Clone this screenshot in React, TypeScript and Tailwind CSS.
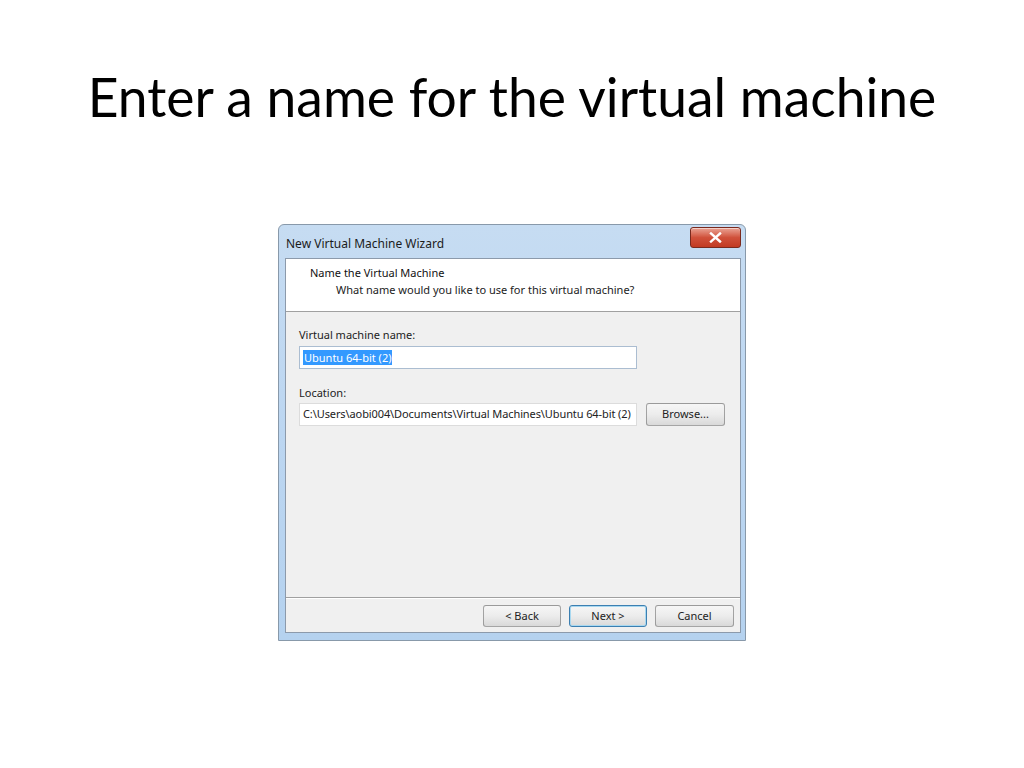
import React from "react";

const uiFont = { fontFamily: '"Noto Sans", "Open Sans", sans-serif' };

function WinButton({ label, focused = false, className = "" }: { label: string; focused?: boolean; className?: string }) {
  return (
    <div
      className={`flex items-center justify-center rounded-[3px] border text-[11px] text-[#222] bg-gradient-to-b from-[#f6f6f6] via-[#ececec] to-[#d9d9d9] ${
        focused ? "border-[#3c7fb1] shadow-[inset_0_0_0_1px_#a8d8f0]" : "border-[#707070]/60"
      } ${className}`}
    >
      {label}
    </div>
  );
}

function CloseButton() {
  return (
    <div className="w-[51px] h-[21px] rounded-[3px] border border-[#7a2a1e] bg-gradient-to-b from-[#e9a395] via-[#d0513b] to-[#c23a22] flex items-center justify-center shadow-[inset_0_1px_0_rgba(255,255,255,0.5)]">
      <svg width="13" height="11" viewBox="0 0 13 11">
        <path d="M2 1.5 L11 9.5 M11 1.5 L2 9.5" stroke="#ffffff" strokeWidth="2.4" strokeLinecap="square" />
      </svg>
    </div>
  );
}

export default function App() {
  return (
    <div className="w-[1024px] h-[768px] bg-white flex flex-col items-center">
      <h1
        className="mt-[60px] text-[53.4px] leading-[72px] text-black"
        style={{ fontFamily: 'Lato, "Open Sans", sans-serif' }}
      >
        Enter a name for the virtual machine
      </h1>

      {/* Wizard dialog screenshot */}
      <div
        className="mt-[92px] w-[468px] h-[417px] flex flex-col rounded-t-[6px] border border-[#8899aa] bg-gradient-to-b from-[#c6dcf2] via-[#bcd6f1] to-[#b5d2ef]"
        style={uiFont}
      >
        {/* title bar */}
        <div className="h-[33px] flex items-start justify-between pl-[7px] pr-[4px]">
          <span className="mt-[10px] text-[12px] text-[#1b1b1b]">New Virtual Machine Wizard</span>
          <div className="mt-[2px]">
            <CloseButton />
          </div>
        </div>

        {/* client */}
        <div className="ml-[6px] mr-[4px] h-[375px] border border-[#8c9aab] flex flex-col bg-[#f0f0f0]">
          <div className="h-[53px] bg-white border-b border-[#a0a0a0] pl-[24px] pt-[6px]">
            <div className="text-[11px] leading-[15px] text-[#111]">Name the Virtual Machine</div>
            <div className="text-[11px] leading-[15px] text-[#222] pl-[26px] mt-[2px]">
              What name would you like to use for this virtual machine?
            </div>
          </div>

          <div className="flex-1 pl-[13px] pt-[15px] text-[11px] text-[#222]">
            <div className="leading-[15px]">Virtual machine name:</div>
            <div className="mt-[4px] w-[338px] h-[23px] bg-white border border-[#abbdd1] flex items-center pl-[3px]">
              <span className="bg-[#3399ff] text-white leading-[15px] px-[1px]">Ubuntu 64-bit (2)</span>
            </div>

            <div className="mt-[16px] leading-[15px]">Location:</div>
            <div className="mt-[3px] flex items-center">
              <div className="w-[338px] h-[23px] bg-white border border-[#dcdcdc] flex items-center pl-[3px] whitespace-nowrap overflow-hidden tracking-[-0.1px]">
                C:\Users\aobi004\Documents\Virtual Machines\Ubuntu 64-bit (2)
              </div>
              <WinButton label="Browse..." className="ml-[9px] w-[79px] h-[23px]" />
            </div>
          </div>

          <div className="h-[35px] border-t border-[#a0a0a0] shadow-[inset_0_1px_0_#ffffff] flex items-start justify-end pr-[6px] pt-[7px] gap-[8px]">
            <WinButton label="< Back" className="w-[78px] h-[22px]" />
            <WinButton label="Next >" focused className="w-[78px] h-[22px]" />
            <WinButton label="Cancel" className="w-[79px] h-[22px]" />
          </div>
        </div>
      </div>
    </div>
  );
}
